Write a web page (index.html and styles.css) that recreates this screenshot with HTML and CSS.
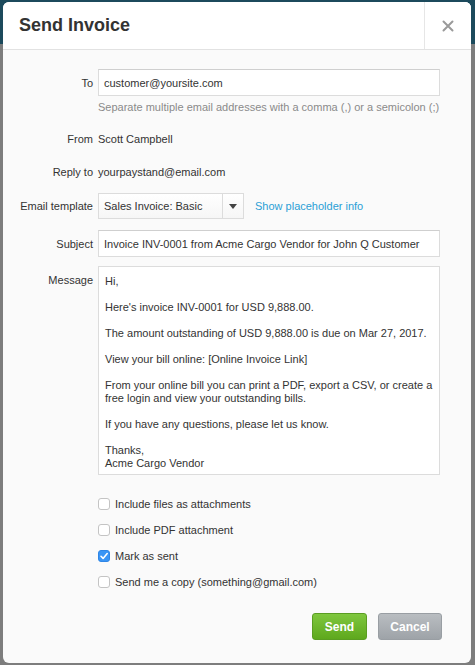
FILE: index.html
```html
<!DOCTYPE html>
<html lang="en">
<head>
    <meta charset="UTF-8">
    <meta name="viewport" content="width=device-width, initial-scale=1.0">
    <title>Send Invoice</title>
    <link rel="stylesheet" href="styles.css">
</head>
<body>
    <div class="modal">
        <div class="modal-header">
            <h1>Send Invoice</h1>
            <button class="close" aria-label="Close">
                <svg width="12" height="12" viewBox="0 0 12 12"><path d="M1.5 1.5 L10.5 10.5 M10.5 1.5 L1.5 10.5" stroke="#9a9a9a" stroke-width="2" stroke-linecap="round"/></svg>
            </button>
        </div>
        <div class="modal-body">
            <div class="row row-to">
                <label>To</label>
                <input type="text" class="input" value="customer@yoursite.com">
            </div>
            <div class="row row-help">
                <span></span>
                <p class="help">Separate multiple email addresses with a comma (,) or a semicolon (;)</p>
            </div>
            <div class="row row-static row-from">
                <label>From</label>
                <span>Scott Campbell</span>
            </div>
            <div class="row row-static row-reply">
                <label>Reply to</label>
                <span>yourpaystand@email.com</span>
            </div>
            <div class="row row-template">
                <label>Email template</label>
                <div class="template-field">
                    <div class="select">
                        <span class="select-value">Sales Invoice: Basic</span>
                        <span class="select-arrow"></span>
                    </div>
                    <a href="#" class="link">Show placeholder info</a>
                </div>
            </div>
            <div class="row row-subject">
                <label>Subject</label>
                <input type="text" class="input" value="Invoice INV-0001 from Acme Cargo Vendor for John Q Customer">
            </div>
            <div class="row row-message">
                <label>Message</label>
                <div class="message">
                    <p>Hi,</p>
                    <p>Here's invoice INV-0001 for USD 9,888.00.</p>
                    <p>The amount outstanding of USD 9,888.00 is due on Mar 27, 2017.</p>
                    <p>View your bill online: [Online Invoice Link]</p>
                    <p>From your online bill you can print a PDF, export a CSV, or create a<br>free login and view your outstanding bills.</p>
                    <p>If you have any questions, please let us know.</p>
                    <p>Thanks,<br>Acme Cargo Vendor</p>
                </div>
            </div>
            <ul class="options">
                <li><span class="checkbox"></span>Include files as attachments</li>
                <li><span class="checkbox"></span>Include PDF attachment</li>
                <li><span class="checkbox checked"><svg width="12" height="12" viewBox="0 0 12 12"><path d="M3 6.3 L5.1 8.4 L9.2 3.6" fill="none" stroke="#fff" stroke-width="1.6" stroke-linecap="round" stroke-linejoin="round"/></svg></span>Mark as sent</li>
                <li><span class="checkbox"></span>Send me a copy (something@gmail.com)</li>
            </ul>
        </div>
        <div class="modal-footer">
            <button class="btn btn-send">Send</button>
            <button class="btn btn-cancel">Cancel</button>
        </div>
    </div>
</body>
</html>
```

FILE: styles.css
```css
:root {
    --text: #333;
    --muted: #8a8a8a;
    --border: #dcdcdc;
    --link: #2a9fd6;
    --body-bg: #fafafa;
}
* { box-sizing: border-box; }
html, body { height: 100%; }
body { margin: 0; padding: 2px 4px 2px 3px; font-family: "Liberation Sans", Arial, Helvetica, sans-serif; font-size: 11px; color: var(--text); background: linear-gradient(to bottom, #1c4a5c 0, #1c4a5c 44px, #7d7d7d 44px, #7d7d7d 100%); }
.modal { width: 468px; height: 661px; background-color: var(--body-bg); border-radius: 6px; overflow: hidden; display: flex; flex-direction: column; }
.modal-header { display: flex; align-items: center; height: 48px; background-color: white; border-bottom: 1px solid #e2e2e2; flex-shrink: 0; }
.modal-header h1 { flex: 1; margin: 0; padding-left: 16px; font-size: 18px; font-weight: bold; color: #333; }
.close { width: 47px; height: 100%; border: none; border-left: 1px solid #e6e6e6; background: white; display: flex; align-items: center; justify-content: center; padding: 0; cursor: pointer; }
.modal-body { padding: 19px 31px 0 0; }
.row { display: grid; grid-template-columns: 90px 1fr; column-gap: 5px; align-items: center; }
.row label { text-align: right; }
.input { height: 27px; width: 100%; border: 1px solid var(--border); border-top-color: #cfcfcf; background: white; padding: 0 5px; font: inherit; color: var(--text); }
.row-to { margin-bottom: 4px; }
.help { margin: 0; color: var(--muted); line-height: 14px; }
.row-help { margin-bottom: 11px; }
.row-static { height: 27px; }
.row-from { margin-bottom: 6px; }
.row-reply { margin-bottom: 8px; }
.template-field { display: flex; align-items: center; }
.select { display: flex; width: 146px; height: 26px; border: 1px solid var(--border); background: linear-gradient(#fff, #f6f6f6); }
.select-value { flex: 1; display: flex; align-items: center; padding-left: 5px; }
.select-arrow { width: 21px; border-left: 1px solid var(--border); display: flex; align-items: center; justify-content: center; }
.select-arrow::after { content: ''; border-left: 4px solid transparent; border-right: 4px solid transparent; border-top: 5px solid #444; }
.link { margin-left: 11px; color: var(--link); text-decoration: none; }
.row-template { margin-bottom: 11px; }
.row-subject { margin-bottom: 9px; }
.row-message { align-items: start; margin-bottom: 21px; }
.row-message label { padding-top: 8px; }
.message { height: 209px; border: 1px solid var(--border); background: white; padding: 8px 6px; line-height: 13px; white-space: nowrap; }
.message p { margin: 0 0 13px; }
.message p:last-child { margin-bottom: 0; }
.options { list-style: none; margin: 0; padding: 0 0 0 95px; }
.options li { display: flex; align-items: center; height: 16px; margin-bottom: 10px; }
.options li:last-child { margin-bottom: 0; }
.checkbox { width: 12px; height: 12px; border: 1px solid #c4c4c4; border-radius: 3px; background: white; margin-right: 5px; display: flex; }
.checkbox.checked { background: #3a95f5; border-color: #2f86e6; }
.checkbox.checked svg { margin: -1px; }
.modal-footer { display: flex; justify-content: flex-end; gap: 11px; padding: 23px 29px 0 0; }
.btn { height: 27px; border-radius: 3px; font-family: inherit; font-size: 12px; font-weight: bold; color: white; padding: 0; cursor: pointer; }
.btn-send { width: 55px; background: linear-gradient(#7fc73e, #5ea81d); border: 1px solid #5a9d22; }
.btn-cancel { width: 64px; background: linear-gradient(#b9bdc1, #9ea3a8); border: 1px solid #999ea3; }
```
